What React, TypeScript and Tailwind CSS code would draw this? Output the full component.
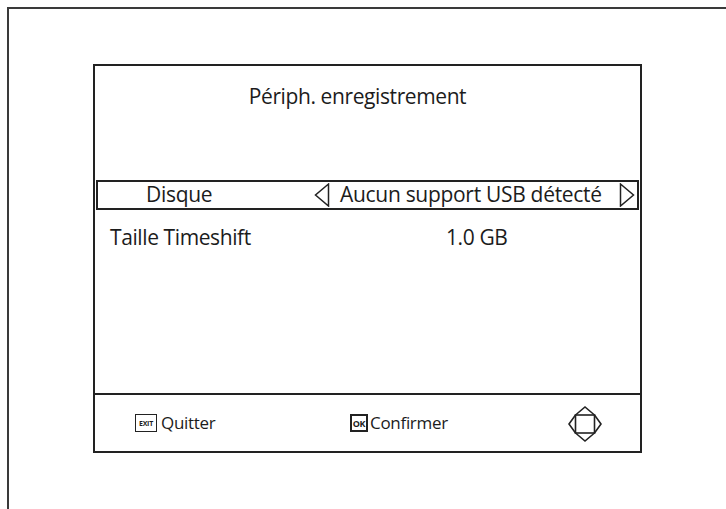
import React from 'react';

const font = { fontFamily: '"Open Sans", "Noto Sans", sans-serif' };

function NavIcon() {
  return (
    <svg width="36" height="38" viewBox="0 0 36 38" fill="none" stroke="#222" strokeWidth="1.6" strokeLinejoin="miter">
      <rect x="8.5" y="10" width="19" height="18" />
      <path d="M8.5 10 L18 2 L27.5 10" />
      <path d="M8.5 28 L18 36 L27.5 28" />
      <path d="M8.5 10 L2 19 L8.5 28" />
      <path d="M27.5 10 L34 19 L27.5 28" />
    </svg>
  );
}

function Arrow({ dir }: { dir: 'left' | 'right' }) {
  return (
    <svg width="16" height="24" viewBox="0 0 16 24" fill="none" stroke="#222" strokeWidth="1.5">
      {dir === 'left' ? <path d="M14.5 1 L1.5 12 L14.5 23 Z" /> : <path d="M1.5 1 L14.5 12 L1.5 23 Z" />}
    </svg>
  );
}

export default function App() {
  return (
    <div className="w-[726px] h-[509px] overflow-hidden bg-white pl-[7px] pt-[7px]" style={font}>
      <div className="w-[740px] h-[520px] border-l-2 border-t-2 border-[#3a3a3a] pl-[84px] pt-[55px]">
        <div className="w-[549px] h-[389px] border-2 border-[#222] flex flex-col text-[#1c1c1c]">
          <div className="h-[64px] flex items-center justify-center text-[21px] tracking-[-0.4px] pb-[3px] pr-[20px]">
            Périph. enregistrement
          </div>
          <div className="h-[50px]" />
          <div className="mx-[1px] h-[30px] border-2 border-[#222] flex items-center text-[21px] tracking-[-0.3px]">
            <div className="w-[216px] pl-[48px]">Disque</div>
            <Arrow dir="left" />
            <div className="flex-1 pl-[10px]">Aucun support USB détecté</div>
            <Arrow dir="right" />
            <div className="w-[2px]" />
          </div>
          <div className="pt-[13px] flex items-center text-[21px] leading-[28px] tracking-[-0.4px]">
            <div className="w-[351px] pl-[15px]">Taille Timeshift</div>
            <div>1.0 GB</div>
          </div>
          <div className="flex-1" />
          <div className="h-[58px] border-t-2 border-[#222] flex items-center text-[17px] tracking-[-0.3px]">
            <div className="w-[208px] pl-[40px] flex items-center gap-[4px]">
              <span className="border-[1.5px] border-[#222] w-[22px] h-[18px] flex items-center justify-center text-[7px] font-bold leading-none tracking-[-0.2px]">EXIT</span>
              <span>Quitter</span>
            </div>
            <div className="w-[264px] pl-[47px] flex items-center gap-[2px]">
              <span className="border-2 border-[#222] w-[18px] h-[18px] flex items-center justify-center text-[9px] font-bold leading-none">OK</span>
              <span>Confirmer</span>
            </div>
            <div className="pt-[2px]">
              <NavIcon />
            </div>
          </div>
        </div>
      </div>
    </div>
  );
}
